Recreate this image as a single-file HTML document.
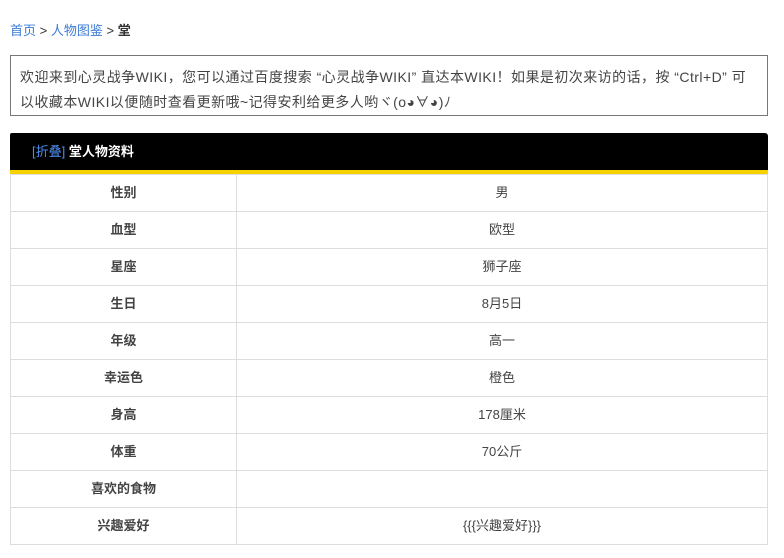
<!DOCTYPE html>
<html><head><meta charset="utf-8"><style>
body{margin:0;background:#fff;font-family:"Liberation Sans","Noto Sans CJK SC",sans-serif;font-size:13px;color:#333;width:784px;height:558px;overflow:hidden;position:relative}
.bc{position:absolute;left:10px;top:20px;font-size:13px;color:#333}
.bc a{color:#3b7bd4;text-decoration:none}
.bc b{font-weight:bold;color:#333}
.notice{position:absolute;left:10px;top:55px;width:737px;height:59px;border:1px solid #777;padding:0 10px 0 9px;font-size:14px;color:#444;white-space:nowrap;letter-spacing:0.45px}
.notice div{position:absolute;left:9px}
.tbl{position:absolute;left:10px;top:133px;width:758px}
.hd{background:#000;height:37px;border-top-right-radius:3px;border-top-left-radius:2px;color:#fff;font-weight:bold;line-height:37px;padding-left:22px;font-size:13px;border-bottom:4px solid #f5d200}
.hd span{color:#4d8ef0;font-weight:normal}
table{border-collapse:collapse;width:758px}
td{border:1px solid #ddd;height:33px;text-align:center;padding:0 0 3px;font-size:13px;color:#444}
td.k{width:225px;font-weight:bold}
</style></head><body>
<div class="bc"><a>首页</a> &gt; <a>人物图鉴</a> &gt; <b>堂</b></div>
<div class="notice"><div style="top:11px">欢迎来到心灵战争WIKI，您可以通过百度搜索 “心灵战争WIKI” 直达本WIKI！如果是初次来访的话，按 “Ctrl+D” 可</div><div style="top:36px">以收藏本WIKI以便随时查看更新哦~记得安利给更多人哟ヾ(o◕∀◕)ﾉ</div></div>
<div class="tbl">
<div class="hd"><span>[折叠]</span> 堂人物资料</div>
<table>
<tr><td class="k">性别</td><td>男</td></tr>
<tr><td class="k">血型</td><td>欧型</td></tr>
<tr><td class="k">星座</td><td>狮子座</td></tr>
<tr><td class="k">生日</td><td>8月5日</td></tr>
<tr><td class="k">年级</td><td>高一</td></tr>
<tr><td class="k">幸运色</td><td>橙色</td></tr>
<tr><td class="k">身高</td><td>178厘米</td></tr>
<tr><td class="k">体重</td><td>70公斤</td></tr>
<tr><td class="k">喜欢的食物</td><td></td></tr>
<tr><td class="k">兴趣爱好</td><td>{{{兴趣爱好}}}</td></tr>
</table>
</div>
</body></html>
